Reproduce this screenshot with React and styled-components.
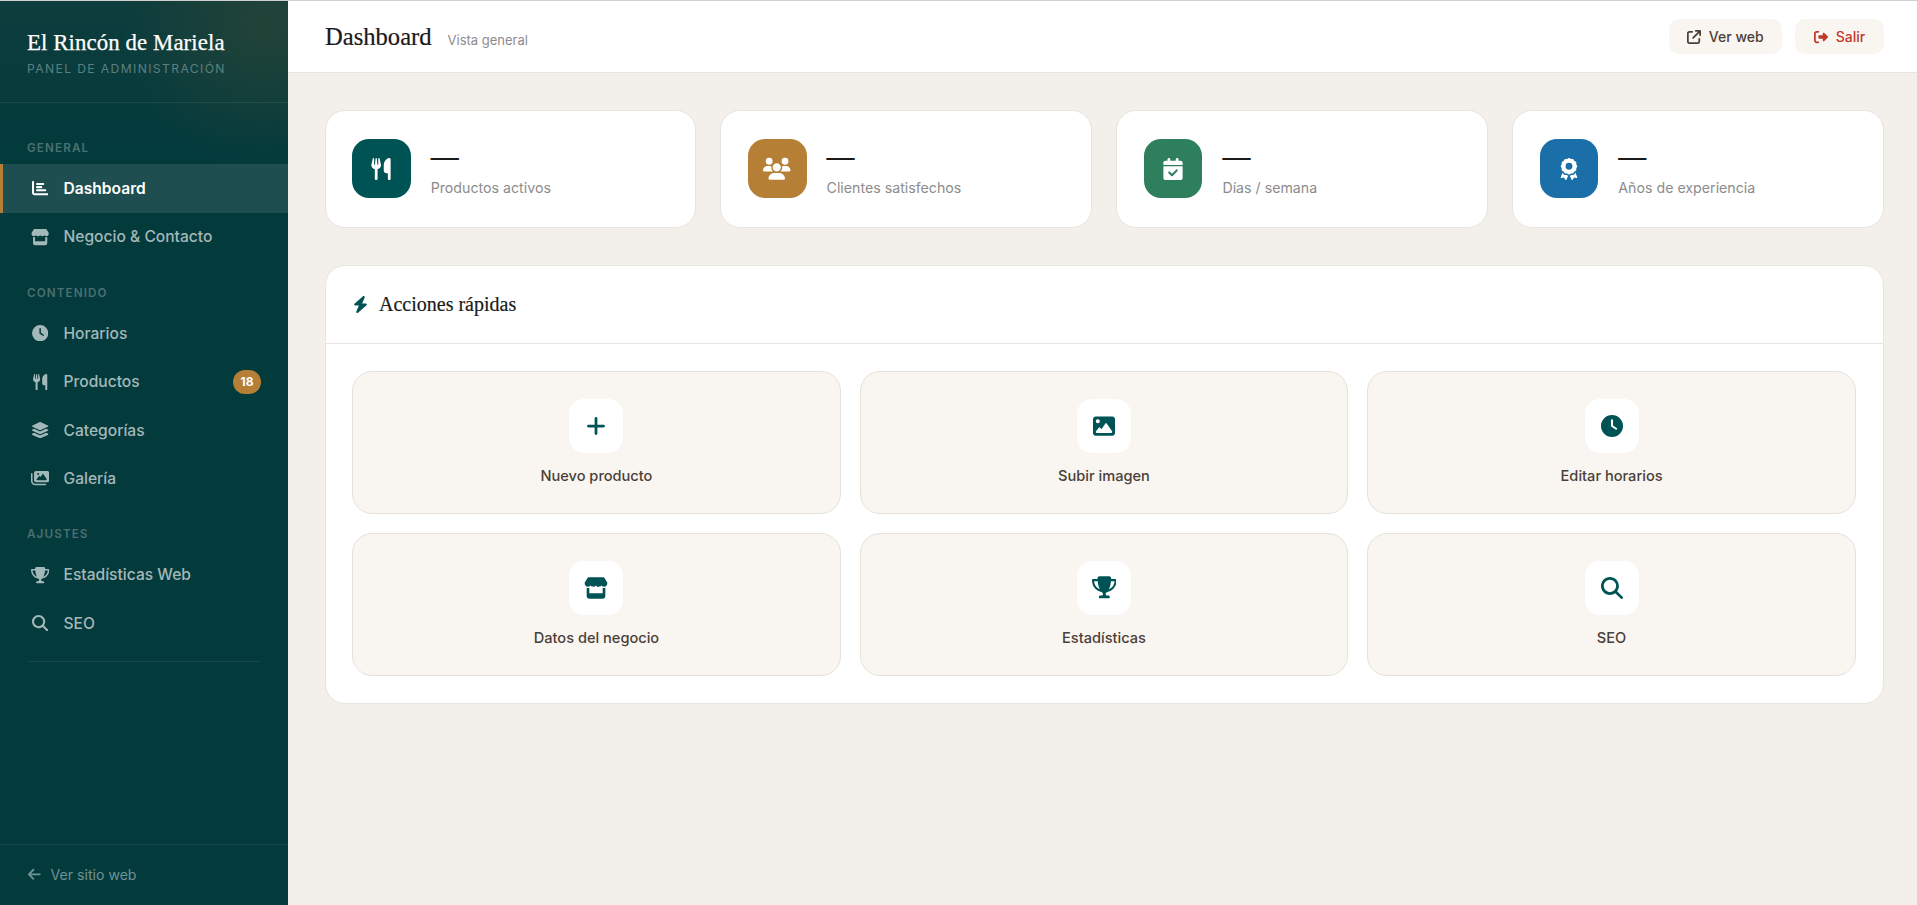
import React from "react";
import styled, { createGlobalStyle } from "styled-components";
import {
  FaChartBar,
  FaStore,
  FaClock,
  FaUtensils,
  FaLayerGroup,
  FaImages,
  FaImage,
  FaTrophy,
  FaMagnifyingGlass,
  FaArrowLeft,
  FaUsers,
  FaCalendarCheck,
  FaAward,
  FaArrowUpRightFromSquare,
  FaRightFromBracket,
  FaBolt,
  FaPlus,
} from "react-icons/fa6";

const SANS = `"Inter", "Liberation Sans", sans-serif`;
const SERIF = `"Liberation Serif", serif`;

// wide glyphs get a bigger size, the icons are fitted in a square box
const navSections = [
  {
    title: "GENERAL",
    items: [
      { label: "Dashboard", icon: FaChartBar, size: 16.3, active: true },
      { label: "Negocio & Contacto", icon: FaStore, size: 18.3 },
    ],
  },
  {
    title: "CONTENIDO",
    items: [
      { label: "Horarios", icon: FaClock, size: 16.3 },
      { label: "Productos", icon: FaUtensils, size: 16.3, badge: 18 },
      { label: "Categorías", icon: FaLayerGroup, size: 18.3 },
      { label: "Galería", icon: FaImages, size: 18.3 },
    ],
  },
  {
    title: "AJUSTES",
    items: [
      { label: "Estadísticas Web", icon: FaTrophy, size: 18.3 },
      { label: "SEO", icon: FaMagnifyingGlass, size: 16.3 },
    ],
  },
];

const stats = [
  { label: "Productos activos", icon: FaUtensils, size: 22, color: "#005354" },
  { label: "Clientes satisfechos", icon: FaUsers, size: 27.5, color: "#b57f35" },
  { label: "Días / semana", icon: FaCalendarCheck, size: 22, color: "#2d7f5e" },
  { label: "Años de experiencia", icon: FaAward, size: 22, color: "#1a6fa8" },
];

const actions = [
  { label: "Nuevo producto", icon: FaPlus, size: 22 },
  { label: "Subir imagen", icon: FaImage, size: 22 },
  { label: "Editar horarios", icon: FaClock, size: 22 },
  { label: "Datos del negocio", icon: FaStore, size: 24 },
  { label: "Estadísticas", icon: FaTrophy, size: 24.7 },
  { label: "SEO", icon: FaMagnifyingGlass, size: 22 },
];

const App = () => {
  return (
    <>
      <GlobalStyle />
      <Shell>
        <Sidebar>
          <Brand>
            <BrandName>El Rincón de Mariela</BrandName>
            <BrandSub>PANEL DE ADMINISTRACIÓN</BrandSub>
          </Brand>
          <Nav>
            {navSections.map((section) => (
              <NavSection key={section.title}>
                <NavLabel>{section.title}</NavLabel>
                {section.items.map((item) => (
                  <NavItem key={item.label} $active={item.active}>
                    <NavIcon>
                      <item.icon size={item.size} />
                    </NavIcon>
                    <span>{item.label}</span>
                    {item.badge && <Badge>{item.badge}</Badge>}
                  </NavItem>
                ))}
              </NavSection>
            ))}
            <NavDivider />
          </Nav>
          <SidebarFooter>
            <FaArrowLeft />
            <span>Ver sitio web</span>
          </SidebarFooter>
        </Sidebar>

        <Main>
          <TopBar>
            <TitleGroup>
              <PageTitle>Dashboard</PageTitle>
              <PageSub>Vista general</PageSub>
            </TitleGroup>
            <TopActions>
              <TopButton>
                <FaArrowUpRightFromSquare />
                Ver web
              </TopButton>
              <TopButton $danger>
                <FaRightFromBracket />
                Salir
              </TopButton>
            </TopActions>
          </TopBar>

          <Content>
            <StatsGrid>
              {stats.map((stat) => (
                <StatCard key={stat.label}>
                  <StatIcon $color={stat.color}>
                    <stat.icon size={stat.size} />
                  </StatIcon>
                  <div>
                    <StatValue>—</StatValue>
                    <StatLabel>{stat.label}</StatLabel>
                  </div>
                </StatCard>
              ))}
            </StatsGrid>

            <Panel>
              <PanelHeader>
                <FaBolt />
                <PanelTitle>Acciones rápidas</PanelTitle>
              </PanelHeader>
              <ActionsGrid>
                {actions.map((action) => (
                  <ActionTile key={action.label}>
                    <ActionIcon>
                      <action.icon size={action.size} />
                    </ActionIcon>
                    <ActionLabel>{action.label}</ActionLabel>
                  </ActionTile>
                ))}
              </ActionsGrid>
            </Panel>
          </Content>
        </Main>
      </Shell>
    </>
  );
};

export default App;

// Styled Components
const GlobalStyle = createGlobalStyle`
  * {
    box-sizing: border-box;
  }

  body {
    margin: 0;
    background-color: #f3f0eb;
    font-family: ${SANS};
  }

  #root {
    border-top: 1px solid #cfcfcf;
  }
`;

const Shell = styled.div`
  display: flex;
  min-height: 904px;
`;

const Sidebar = styled.aside`
  width: 288px;
  flex-shrink: 0;
  display: flex;
  flex-direction: column;
  background:
    radial-gradient(circle at 92% 3%, rgba(60, 75, 50, 0.45) 0, rgba(60, 75, 50, 0) 140px),
    linear-gradient(180deg, #0e3d3d 0, #033a3c 150px);
`;

const Brand = styled.div`
  height: 102px;
  padding: 26.5px 27px 0;
  border-bottom: 1px solid rgba(255, 255, 255, 0.08);
`;

const BrandName = styled.div`
  font-family: ${SERIF};
  font-size: 22.8px;
  font-weight: 400;
  line-height: 30px;
  letter-spacing: 0.1px;
  -webkit-text-stroke: 0.25px #ffffff;
  color: #ffffff;
`;

const BrandSub = styled.div`
  margin-top: 3px;
  font-size: 12.2px;
  line-height: 16px;
  letter-spacing: 1.35px;
  color: #5c8080;
`;

const Nav = styled.nav`
  padding-top: 37px;
`;

const NavSection = styled.div`
  margin-bottom: 23.7px;

  &:nth-last-child(2) {
    margin-bottom: 14px;
  }
`;

const NavLabel = styled.div`
  height: 16px;
  margin-bottom: 8.3px;
  padding-left: 27px;
  font-size: 11.7px;
  font-weight: 600;
  line-height: 16px;
  letter-spacing: 1.1px;
  color: #4b7070;
`;

const NavItem = styled.div`
  height: 48.4px;
  display: flex;
  align-items: center;
  gap: 14px;
  padding: 0 27px;
  border-left: 3px solid ${(props) => (props.$active ? "#b57f35" : "transparent")};
  background-color: ${(props) => (props.$active ? "#1f4e50" : "transparent")};
  font-size: 15.6px;
  font-weight: ${(props) => (props.$active ? 600 : 500)};
  color: ${(props) => (props.$active ? "#ffffff" : "#a3b8b8")};
`;

const NavIcon = styled.span`
  width: 19px;
  margin-left: 0.5px;
  display: flex;
  justify-content: center;
`;

const Badge = styled.span`
  margin-left: auto;
  width: 28px;
  height: 24px;
  display: flex;
  align-items: center;
  justify-content: center;
  border-radius: 12px;
  background-color: #b57f35;
  font-size: 12px;
  font-weight: 700;
  color: #ffffff;
`;

const NavDivider = styled.div`
  height: 1px;
  margin: 0 27px;
  background-color: rgba(255, 255, 255, 0.08);
`;

const SidebarFooter = styled.div`
  margin-top: auto;
  height: 61px;
  display: flex;
  align-items: center;
  gap: 9px;
  padding: 0 27px 1.5px;
  border-top: 1px solid rgba(255, 255, 255, 0.08);
  font-size: 14.1px;
  color: #6f9292;

  svg {
    font-size: 14.6px;
  }
`;

const Main = styled.main`
  flex: 1;
  min-width: 0;
`;

const TopBar = styled.header`
  height: 72px;
  display: flex;
  align-items: center;
  justify-content: space-between;
  padding: 0 33px 0 37px;
  background-color: #ffffff;
  border-bottom: 1px solid #e8e4de;
`;

const TitleGroup = styled.div`
  display: flex;
  align-items: baseline;
  gap: 16px;
`;

const PageTitle = styled.h1`
  margin: 0;
  font-family: ${SERIF};
  font-size: 24.6px;
  font-weight: 400;
  -webkit-text-stroke: 0.2px #1a1a1a;
  color: #1a1a1a;
`;

const PageSub = styled.span`
  font-size: 13px;
  color: #8c8c8c;
`;

const TopActions = styled.div`
  display: flex;
  gap: 13px;
`;

const TopButton = styled.button`
  height: 35px;
  display: flex;
  align-items: center;
  gap: 7.5px;
  padding: 0 18.8px;
  border: none;
  border-radius: 10px;
  background-color: #f9f6f1;
  font-family: ${SANS};
  font-size: 14px;
  font-weight: 550;
  color: ${(props) => (props.$danger ? "#c0392b" : "#4a4038")};
`;

const Content = styled.div`
  padding: 36.5px 33.5px 0 36.5px;
`;

const StatsGrid = styled.div`
  display: grid;
  grid-template-columns: repeat(4, 1fr);
  gap: 24.5px;
`;

const StatCard = styled.div`
  height: 118px;
  display: flex;
  align-items: center;
  gap: 20px;
  padding: 0 26.5px;
  border: 1px solid #e8e4de;
  border-radius: 20px;
  background-color: #ffffff;
`;

const StatIcon = styled.div`
  width: 58.7px;
  height: 58.7px;
  display: flex;
  align-items: center;
  justify-content: center;
  flex-shrink: 0;
  border-radius: 17px;
  background-color: ${(props) => props.$color};
  color: #ffffff;
`;

const StatValue = styled.div`
  font-family: ${SERIF};
  font-size: 28px;
  font-weight: 700;
  line-height: 34px;
  color: #1a1a1a;
`;

const StatLabel = styled.div`
  margin-top: 4.5px;
  font-size: 14.2px;
  line-height: 20px;
  color: #8c8c8c;
`;

const Panel = styled.section`
  margin-top: 37px;
  border: 1px solid #e8e4de;
  border-radius: 20px;
  background-color: #ffffff;
`;

const PanelHeader = styled.div`
  height: 78px;
  display: flex;
  align-items: center;
  gap: 10px;
  padding: 0 26.5px;
  border-bottom: 1px solid #e8e4de;
  color: #005354;

  svg {
    font-size: 17px;
  }
`;

const PanelTitle = styled.h2`
  margin: 0;
  font-family: ${SERIF};
  font-size: 20px;
  font-weight: 400;
  -webkit-text-stroke: 0.2px #1a1a1a;
  color: #1a1a1a;
`;

const ActionsGrid = styled.div`
  display: grid;
  grid-template-columns: repeat(3, 1fr);
  gap: 19px 18.7px;
  padding: 27px 26.5px;
`;

const ActionTile = styled.div`
  height: 143px;
  display: flex;
  flex-direction: column;
  align-items: center;
  padding-top: 27px;
  border: 1.2px solid #e6e1da;
  border-radius: 20px;
  background-color: #f9f6f1;
`;

const ActionIcon = styled.div`
  width: 54px;
  height: 54px;
  display: flex;
  align-items: center;
  justify-content: center;
  border-radius: 15px;
  background-color: #ffffff;
  color: #005354;
`;

const ActionLabel = styled.div`
  margin-top: 13px;
  font-size: 14.6px;
  font-weight: 550;
  line-height: 20px;
  color: #4a4038;
`;
